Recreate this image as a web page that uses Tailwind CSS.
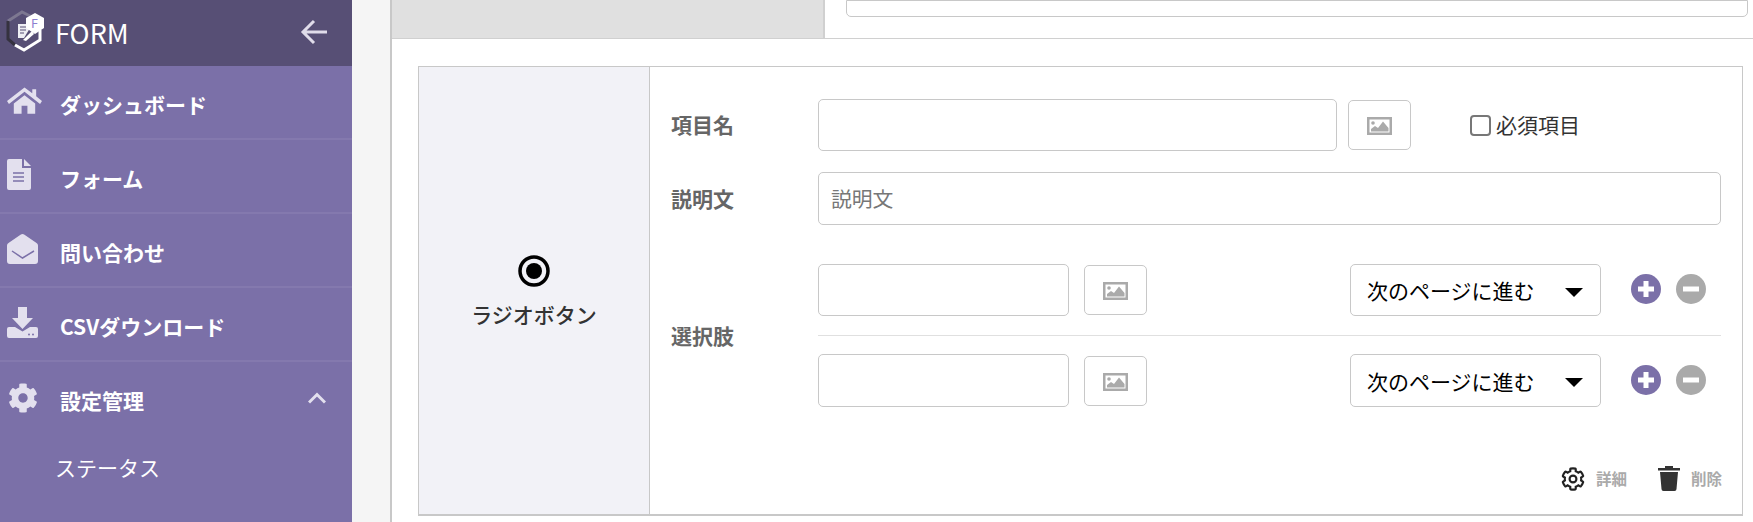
<!DOCTYPE html>
<html lang="ja">
<head>
    <meta charset="UTF-8">
    <title>FORM</title>
    <script src="https://cdn.jsdelivr.net/npm/@tailwindcss/browser@4"></script>
</head>
<body class="h-[522px] overflow-hidden bg-[#f5f5f5] font-['Noto_Sans_CJK_JP','Noto_Sans',sans-serif]">
<div class="flex h-[522px]">

    <!-- sidebar -->
    <aside class="w-[352px] shrink-0 bg-[#7b70a8] text-white">
        <div class="flex h-[66px] items-center bg-[#574f75] pl-[6px] pr-[24px]">
            <svg class="w-[38px] h-[42px] shrink-0 -mt-[4px]" viewBox="0 0 38 42">
                <path d="M2 11 L16 2 L24 6" fill="none" stroke="#7d7891" stroke-width="3"/>
                <path d="M2 11 V29 L9 35" fill="none" stroke="#35323f" stroke-width="3"/>
                <path d="M9 35 L18 40 L34 30 V20" fill="none" stroke="#fff" stroke-width="3"/>
                <path d="M12 14 H24 V18 L18 28 H12 Z" fill="#eeeef4"/>
                <path d="M14 17 H20 M14 20 H20 M14 23 H18" stroke="#574f75" stroke-width="1"/>
                <path d="M17 30 L26 21 L28 24 L20 31 Z" fill="#fff"/>
                <path d="M29 3 L38 8 V18 L29 24 L20 18 V8 Z" fill="#fff"/>
                <text x="25" y="18" font-size="13" fill="#8d7fd0" font-family="Noto Sans">F</text>
            </svg>
            <span class="ml-[11px] text-[27px] leading-none -mt-[2px]">FORM</span>
            <svg class="ml-auto w-[28px] h-[26px] -mt-[2px]" viewBox="0 0 28 26" fill="none" stroke="#e0dcea" stroke-width="3">
                <path d="M27 13 H3 M14 2 L3 13 L14 24"/>
            </svg>
        </div>

        <a class="flex h-[74px] items-center border-b-2 border-[#8479ae] pl-[7px] pt-[5px] text-[21px] font-bold">
            <span class="w-[53px] -mt-[8px]">
                <svg class="w-[35px] h-[28px]" viewBox="0 0 36 28" fill="#e3e0ee"><path d="M18 0 L0 14 l2 3 L18 4.5 L34 17 l2-3 -6-5 V2 h-4 v4 Z"/><path d="M18 8 L7 16.5 V27 h8 v-8 h6 v8 h8 V16.5 Z"/></svg>
            </span>
            ダッシュボード
        </a>
        <a class="flex h-[74px] items-center border-b-2 border-[#8479ae] pl-[7px] pt-[5px] text-[21px] font-bold">
            <span class="w-[53px] -mt-[8px]">
                <svg class="w-[24px] h-[31px]" viewBox="0 0 24 31" fill="#e3e0ee"><path d="M2 0 H15 V9 H24 V29 a2 2 0 0 1-2 2 H2 a2 2 0 0 1-2-2 V2 a2 2 0 0 1 2-2Z"/><path d="M17 0 L24 7 H17 Z"/><path d="M6 14 H17 M6 18 H17 M6 22 H17" stroke="#7b70a8" stroke-width="1.5"/></svg>
            </span>
            フォーム
        </a>
        <a class="flex h-[74px] items-center border-b-2 border-[#8479ae] pl-[7px] pt-[5px] text-[21px] font-bold">
            <span class="w-[53px] -mt-[8px]">
                <svg class="w-[31px] h-[30px]" viewBox="0 0 31 30" fill="#e3e0ee"><path d="M13.5 .8 a3.5 3.5 0 0 1 4 0 L29.5 9 a3 3 0 0 1 1.5 2.5 V27 a3 3 0 0 1-3 3 H3 a3 3 0 0 1-3-3 V11.500 A3 3 0 0 1 1.500 9 Z"/><path d="M5 17 L15.500 24 L27 17" fill="none" stroke="#7b70a8" stroke-width="1.500"/></svg>
            </span>
            問い合わせ
        </a>
        <a class="flex h-[74px] items-center border-b-2 border-[#8479ae] pl-[7px] pt-[5px] text-[21px] font-bold">
            <span class="w-[53px] -mt-[8px]">
                <svg class="w-[31px] h-[31px]" viewBox="0 0 31 31" fill="#e3e0ee"><path d="M11 0 h9 v11 h6 L15.500 22 L5 11 h6 Z"/><path d="M2 20 H8 l7.500 4.500 7.500-4.500 h6 a2 2 0 0 1 2 2 v7 a2 2 0 0 1-2 2 H2 a2 2 0 0 1-2-2 v-7 a2 2 0 0 1 2-2Z"/><circle cx="22" cy="27.500" r="1" fill="#7b70a8"/><circle cx="26" cy="27.500" r="1" fill="#7b70a8"/></svg>
            </span>
            CSVダウンロード
        </a>
        <a class="flex h-[74px] items-center pl-[7px] pr-[26px] pt-[4px] text-[21px] font-bold">
            <span class="w-[53px] -mt-[7px]">
                <svg class="ml-[1px] w-[30px] h-[30px]" viewBox="0 0 512 512" fill="#e3e0ee"><path d="M487.4 315.7l-42.6-24.6c4.3-23.2 4.3-47 0-70.2l42.6-24.6c4.9-2.8 7.1-8.6 5.5-14-11.1-35.6-30-67.8-54.7-94.6-3.8-4.1-10-5.1-14.8-2.3L380.8 110c-17.9-15.4-38.5-27.3-60.8-35.1V25.8c0-5.6-3.9-10.5-9.4-11.7-36.7-8.2-74.3-7.8-109.2 0-5.5 1.2-9.4 6.1-9.4 11.7V75c-22.2 7.9-42.8 19.8-60.8 35.1L88.7 85.5c-4.9-2.8-11-1.9-14.8 2.3-24.7 26.7-43.6 58.9-54.7 94.6-1.7 5.4.6 11.2 5.5 14L67.3 221c-4.3 23.2-4.3 47 0 70.2l-42.6 24.6c-4.9 2.8-7.1 8.6-5.5 14 11.1 35.6 30 67.8 54.7 94.6 3.8 4.1 10 5.1 14.8 2.3l42.6-24.6c17.9 15.4 38.5 27.3 60.8 35.1v49.2c0 5.6 3.9 10.5 9.4 11.7 36.7 8.2 74.3 7.8 109.2 0 5.5-1.2 9.4-6.1 9.4-11.7v-49.2c22.2-7.9 42.8-19.8 60.8-35.1l42.6 24.6c4.9 2.8 11 1.9 14.8-2.3 24.7-26.7 43.6-58.9 54.7-94.6 1.5-5.500-.7-11.300-5.600-14.100zM256 336c-44.100 0-80-35.900-80-80s35.900-80 80-80 80 35.900 80 80-35.900 80-80 80z"/></svg>
            </span>
            設定管理
            <svg class="ml-auto w-[18px] h-[12px] -mt-[6px]" viewBox="0 0 18 12" fill="none" stroke="#e3e0ee" stroke-width="3"><path d="M1 10.500 L9 2.500 L17 10.500"/></svg>
        </a>
        <a class="flex h-[64px] items-center pl-[55px] text-[21px]">ステータス</a>
    </aside>

    <!-- main -->
    <main class="flex-1 pl-[38px]">
        <div class="h-full border-l-2 border-[#c8c8c8] bg-white">

            <!-- previous card, cut off by the top of the window -->
            <div class="flex h-[39px] border-b border-[#d0d0d0]">
                <div class="w-[433px] border-r-2 border-[#d0d0d0] bg-[#e0e0e0]"></div>
                <div class="flex-1 pl-[21px] pr-[5px]">
                    <div class="h-[17px] rounded-b-[5px] border border-[#c8c8c8]"></div>
                </div>
            </div>

            <!-- radio button card -->
            <div class="ml-[26px] mr-[10px] mt-[27px] flex h-[450px] border border-b-2 border-[#c8c8c8]">
                <div class="flex w-[231px] flex-col items-center border-r border-[#c8c8c8] bg-[#f2f2f7] pt-[188px]">
                    <svg class="w-[32px] h-[32px]" viewBox="0 0 32 32"><circle cx="16" cy="16" r="14" fill="none" stroke="#000" stroke-width="3.500"/><circle cx="16" cy="16" r="8" fill="#000"/></svg>
                    <span class="mt-[12px] text-[21px] font-medium text-[#333]">ラジオボタン</span>
                </div>

                <div class="flex-1 pl-[21px] pt-[32px] text-[21px]">
                    <div class="flex items-center">
                        <label class="w-[147px] font-bold text-[#666]">項目名</label>
                        <input type="text" class="h-[52px] w-[519px] rounded-[5px] border border-[#c8c8c8]">
                        <button class="ml-[11px] flex h-[50px] w-[63px] items-center justify-center rounded-[5px] border border-[#c8c8c8]">
                            <svg class="mt-[2px] w-[25px] h-[18px]" viewBox="0 0 25 18"><rect x="1.250" y="1.250" width="22.500" height="15.500" fill="none" stroke="#aaa" stroke-width="2.500"/><circle cx="6" cy="6" r="1.800" fill="#aaa"/><path d="M4 14.500 V12 L8 9 L11 11 L16 4.500 L21.500 11 V14.500 Z" fill="#aaa"/></svg>
                        </button>
                        <input type="checkbox" class="ml-[59px] h-[21px] w-[21px] appearance-none rounded-[4px] border-2 border-[#777]">
                        <span class="ml-[5px] text-[#333]">必須項目</span>
                    </div>

                    <div class="mt-[21px] flex items-center">
                        <label class="w-[147px] font-bold text-[#666]">説明文</label>
                        <input type="text" placeholder="説明文" class="h-[53px] w-[903px] rounded-[5px] border border-[#c8c8c8] px-[12px] pb-[2px] text-[20.800px] placeholder:text-[#777]">
                    </div>

                    <div class="mt-[39px] flex items-center">
                        <label class="w-[147px] font-bold text-[#666]">選択肢</label>
                        <div class="w-[903px]">
                            <div class="flex items-center border-b border-[#e0e0e0] pb-[19px]">
                                <input type="text" class="h-[52px] w-[251px] rounded-[5px] border border-[#c8c8c8]">
                                <button class="ml-[15px] flex h-[50px] w-[63px] items-center justify-center rounded-[5px] border border-[#c8c8c8]">
                                    <svg class="mt-[2px] w-[25px] h-[18px]" viewBox="0 0 25 18"><rect x="1.250" y="1.250" width="22.500" height="15.500" fill="none" stroke="#aaa" stroke-width="2.500"/><circle cx="6" cy="6" r="1.800" fill="#aaa"/><path d="M4 14.500 V12 L8 9 L11 11 L16 4.500 L21.500 11 V14.500 Z" fill="#aaa"/></svg>
                                </button>
                                <div class="relative ml-[203px] w-[251px]">
                                    <select class="h-[52px] w-full appearance-none rounded-[5px] border border-[#c8c8c8] bg-white pl-[16px] pt-[2px] text-black"><option>次のページに進む</option></select>
                                    <svg class="absolute right-[18px] top-[24px] w-[18px] h-[9px]" viewBox="0 0 18 9"><path d="M0 0 H18 L9 9 Z" fill="#000"/></svg>
                                </div>
                                <svg class="ml-[30px] w-[30px] h-[30px] -mt-[2px]" viewBox="0 0 30 30"><circle cx="15" cy="15" r="15" fill="#7b70a8"/><path d="M15 7 V23 M7 15 H23" stroke="#fff" stroke-width="5"/></svg>
                                <svg class="ml-[15px] w-[30px] h-[30px] -mt-[2px]" viewBox="0 0 30 30"><circle cx="15" cy="15" r="15" fill="#aaa"/><path d="M7 15 H23" stroke="#fff" stroke-width="5"/></svg>
                            </div>
                            <div class="flex items-center pt-[18px]">
                                <input type="text" class="h-[53px] w-[251px] rounded-[5px] border border-[#c8c8c8]">
                                <button class="ml-[15px] flex h-[50px] w-[63px] items-center justify-center rounded-[5px] border border-[#c8c8c8]">
                                    <svg class="mt-[2px] w-[25px] h-[18px]" viewBox="0 0 25 18"><rect x="1.250" y="1.250" width="22.500" height="15.500" fill="none" stroke="#aaa" stroke-width="2.500"/><circle cx="6" cy="6" r="1.800" fill="#aaa"/><path d="M4 14.500 V12 L8 9 L11 11 L16 4.500 L21.500 11 V14.500 Z" fill="#aaa"/></svg>
                                </button>
                                <div class="relative ml-[203px] w-[251px]">
                                    <select class="h-[53px] w-full appearance-none rounded-[5px] border border-[#c8c8c8] bg-white pl-[16px] pt-[2px] text-black"><option>次のページに進む</option></select>
                                    <svg class="absolute right-[18px] top-[24px] w-[18px] h-[9px]" viewBox="0 0 18 9"><path d="M0 0 H18 L9 9 Z" fill="#000"/></svg>
                                </div>
                                <svg class="ml-[30px] w-[30px] h-[30px] -mt-[2px]" viewBox="0 0 30 30"><circle cx="15" cy="15" r="15" fill="#7b70a8"/><path d="M15 7 V23 M7 15 H23" stroke="#fff" stroke-width="5"/></svg>
                                <svg class="ml-[15px] w-[30px] h-[30px] -mt-[2px]" viewBox="0 0 30 30"><circle cx="15" cy="15" r="15" fill="#aaa"/><path d="M7 15 H23" stroke="#fff" stroke-width="5"/></svg>
                            </div>
                        </div>
                    </div>

                    <div class="mt-[59px] flex w-[1051px] items-center justify-end text-[15.500px] font-bold text-[#aaa]">
                        <svg class="w-[24px] h-[24px]" viewBox="-24 -24 560 560" fill="none" stroke="#222" stroke-width="50"><path d="M487.4 315.7l-42.6-24.6c4.3-23.2 4.3-47 0-70.2l42.6-24.6c4.9-2.8 7.1-8.6 5.5-14-11.1-35.6-30-67.8-54.7-94.6-3.8-4.1-10-5.1-14.8-2.3L380.8 110c-17.9-15.4-38.5-27.3-60.8-35.1V25.8c0-5.6-3.9-10.5-9.4-11.7-36.7-8.2-74.3-7.8-109.2 0-5.5 1.2-9.4 6.1-9.4 11.7V75c-22.2 7.9-42.8 19.8-60.8 35.1L88.7 85.5c-4.9-2.8-11-1.9-14.8 2.3-24.7 26.7-43.6 58.9-54.7 94.6-1.7 5.4.6 11.2 5.5 14L67.3 221c-4.3 23.2-4.3 47 0 70.2l-42.6 24.6c-4.9 2.8-7.1 8.6-5.5 14 11.1 35.6 30 67.8 54.7 94.6 3.8 4.1 10 5.1 14.8 2.3l42.6-24.6c17.9 15.4 38.5 27.3 60.8 35.1v49.2c0 5.6 3.9 10.5 9.4 11.7 36.7 8.2 74.3 7.8 109.2 0 5.5-1.2 9.4-6.1 9.4-11.7v-49.2c22.2-7.9 42.8-19.8 60.8-35.1l42.6 24.6c4.9 2.8 11 1.9 14.8-2.3 24.7-26.7 43.6-58.9 54.7-94.6 1.5-5.500-.7-11.300-5.600-14.100zM256 336c-44.100 0-80-35.900-80-80s35.900-80 80-80 80 35.900 80 80-35.900 80-80 80z"/></svg>
                        <span class="ml-[11px]">詳細</span>
                        <svg class="ml-[31px] w-[22px] h-[25px]" viewBox="0 0 22 25" fill="#333"><path d="M0 2 H7 V0 H15 V2 H22 V4.500 H0 Z"/><path d="M2 6 H20 L18.500 23 a2 2 0 0 1-2 2 H5.500 a2 2 0 0 1-2-2 Z"/></svg>
                        <span class="ml-[11px]">削除</span>
                    </div>
                </div>
            </div>
        </div>
    </main>
</div>
</body>
</html>
